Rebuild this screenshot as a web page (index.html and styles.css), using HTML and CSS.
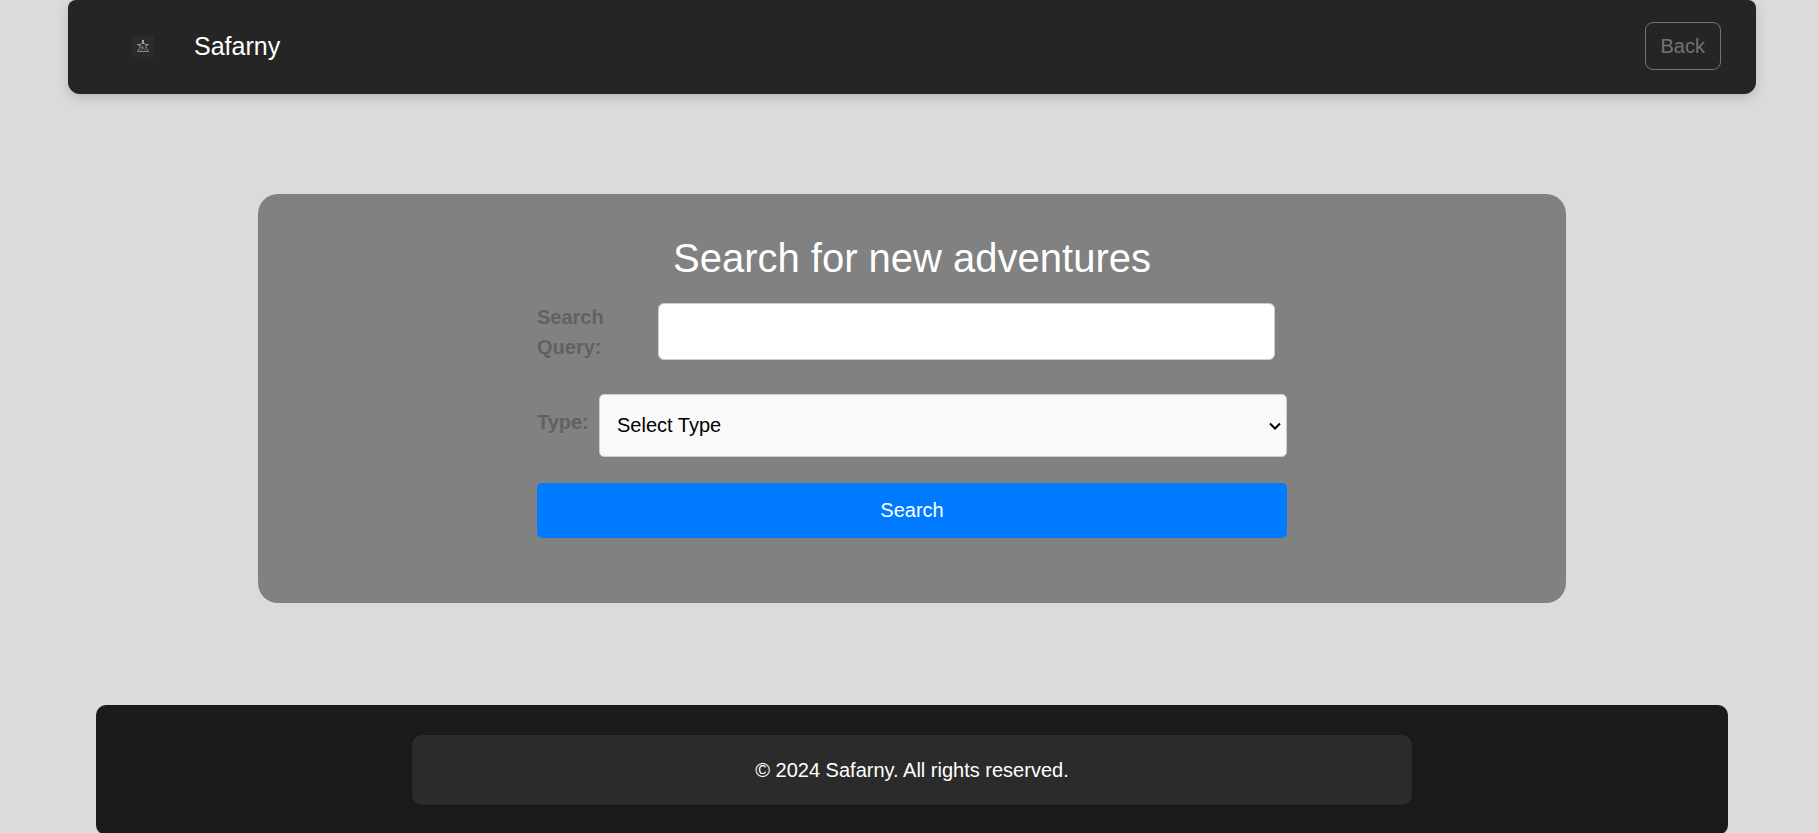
FILE: index.html
```html
<!DOCTYPE html>
<html lang="en">
<head>
<meta charset="utf-8">
<meta name="viewport" content="width=device-width, initial-scale=1">
<title>Safarny</title>
<link rel="stylesheet" href="styles.css">
</head>
<body>
<header class="navbar">
  <svg class="logo" viewBox="0 0 22 22" aria-hidden="true">
    <rect width="22" height="22" rx="1" fill="#2b2b2b"/>
    <path d="M10 5h2v3h-2z" fill="#a5a5a5"/>
    <g fill="none" stroke="#8a8a8a">
      <path d="M5 9.500h4M13 9.500h4M9 8.500h4M6.500 10.500h2M13.500 10.500h2M8.500 10.500l-1 3l-2 3M13.500 10.500l1 3l2 3M5.500 16.500h11"/>
      <path d="M10 10.500l1.500 2M11.500 13.500l2 1.500M8.500 14.500h2M10.500 12v2M9 12.500h1" stroke="#777"/>
    </g>
  </svg>
  <a class="brand" href="#">Safarny</a>
  <button class="back" type="button">Back</button>
</header>
<main class="card">
  <h1 class="title">Search for new adventures</h1>
  <form class="form">
    <div class="row row-query">
      <label class="label label-query" for="query">Search Query:</label>
      <input class="query" id="query" type="text">
    </div>
    <div class="row row-type">
      <label class="label label-type" for="type">Type:</label>
      <div class="select">
        <select class="type" id="type"><option>Select Type</option></select>
        <svg class="chevron" viewBox="0 0 12 8" aria-hidden="true"><path d="M1 1.500l5 5l5-5" fill="none" stroke="#000" stroke-width="2"/></svg>
      </div>
    </div>
    <button class="submit" type="submit">Search</button>
  </form>
</main>
<footer class="footer">
  <p class="copyright">© 2024 Safarny. All rights reserved.</p>
</footer>
</body>
</html>
```

FILE: styles.css
```css
* {
  box-sizing: border-box;
}

html {
  background: #dbdbdb;
}

body {
  margin: 0;
  padding-left: 6px;
  overflow-x: hidden;
  font: 20px/30px "Liberation Sans", Arial, sans-serif;
}

button,
input,
select {
  font: inherit;
}

.navbar {
  display: flex;
  align-items: center;
  margin: 0 62px 100px;
  padding: 22px 35px 24px 64px;
  border-radius: 8px 8px 12px 12px;
  background: #252525;
  box-shadow: 0 4px 12px rgba(0, 0, 0, 0.15);
}

.logo {
  width: 22px;
  height: 22px;
}

.brand {
  margin-left: 40px;
  color: #fff;
  font-size: 25px;
  text-decoration: none;
}

.back {
  margin-left: auto;
  padding: 8px 15px;
  border: 1px solid #6c757d;
  border-radius: 8px;
  background: transparent;
  color: #6c757d;
}

.card {
  margin: 0 252px 102px;
  padding: 40px 20px 65px;
  border-radius: 20px;
  background: #818181;
}

.title {
  margin: 0 0 20px;
  color: #fff;
  font-size: 40px;
  font-weight: 400;
  line-height: 48px;
  text-align: center;
}

.form {
  max-width: 750px;
  margin: 0 auto;
}

.row {
  display: flex;
  align-items: center;
}

.row-query {
  align-items: flex-start;
  margin-bottom: 32px;
  padding-right: 12px;
}

.row-type {
  margin-bottom: 26px;
}

.label {
  color: #616161;
  font-weight: 700;
}

.label-query {
  flex: 0 0 121px;
  padding-right: 30px;
}

.label-type {
  flex: 0 0 62px;
  padding-bottom: 8px;
}

.query {
  flex: 1;
  min-width: 0;
  height: 57px;
  margin-top: 1px;
  padding: 12px;
  border: 1px solid #ccc;
  border-radius: 6px;
  background: #fff;
}

.select {
  position: relative;
  flex: 1;
  min-width: 0;
}

.type {
  display: block;
  width: 100%;
  height: 63px;
  padding: 0 36px 2px 17px;
  border: 1px solid #ccc;
  border-radius: 5px;
  appearance: none;
  background: #f9f9f9;
  color: #000;
}

.chevron {
  position: absolute;
  top: 28px;
  right: 6px;
  width: 12px;
  height: 8px;
  pointer-events: none;
}

.submit {
  display: block;
  width: 100%;
  height: 55px;
  padding: 0 0 2px;
  border: 0;
  border-radius: 5px;
  background: #007bff;
  color: #fff;
}

.footer {
  margin: 0 90px;
  padding: 30px 20px;
  border-radius: 10px;
  background: #1b1b1b;
}

.copyright {
  max-width: 1000px;
  margin: 0 auto;
  padding: 20px;
  border-radius: 10px;
  background: #2b2b2b;
  box-shadow: 0 2px 5px rgba(0, 0, 0, 0.1);
  color: #fff;
  text-align: center;
}
```
